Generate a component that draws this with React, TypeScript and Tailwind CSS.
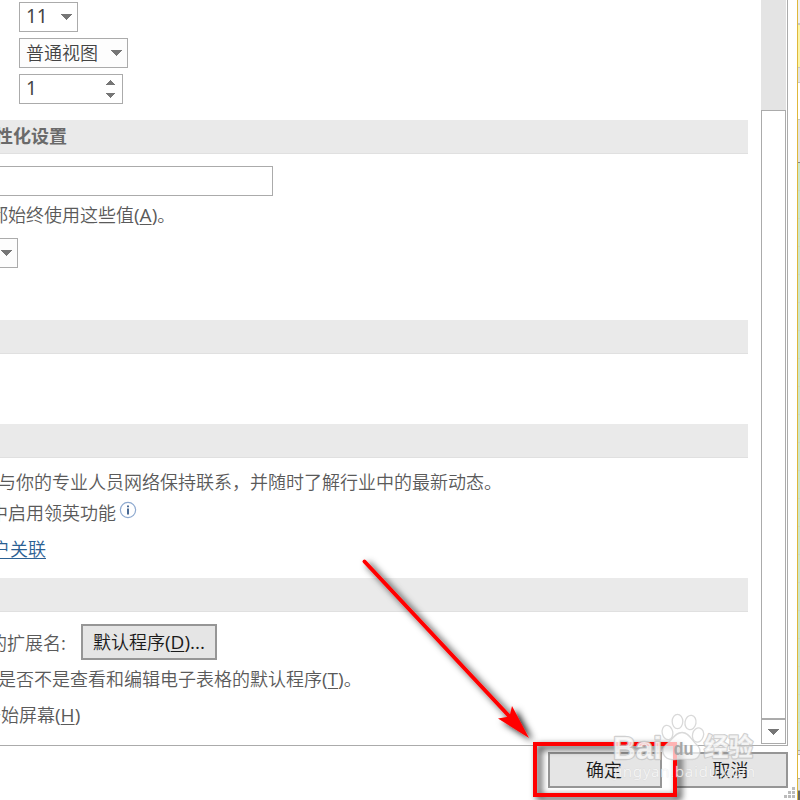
import type { ReactNode } from 'react';

function Down({ className = '' }: { className?: string }) {
  return (
    <svg className={className} width="11" height="6" viewBox="0 0 11 6" shapeRendering="crispEdges">
      <path d="M0 0H11L5.5 6Z" fill="#767676" />
    </svg>
  );
}

function SectionBar({ children, className = '' }: { children?: ReactNode; className?: string }) {
  return (
    <div className={`flex h-[34px] w-[748px] shrink-0 items-center border-b border-[#e0e0e0] bg-[#eaeaea] font-bold text-[#6a6a6a] ${className}`}>
      {children}
    </div>
  );
}

function Line({ children, className = '' }: { children: ReactNode; className?: string }) {
  return <div className={`flex h-[24px] shrink-0 items-center whitespace-nowrap ${className}`}>{children}</div>;
}

function Key({ children }: { children: string }) {
  return <span className="underline decoration-1 underline-offset-2">{children}</span>;
}

function Latin({ children }: { children: ReactNode }) {
  return <span className="font-['Open_Sans'] text-[19px] font-normal">{children}</span>;
}

function InfoIcon() {
  return (
    <svg className="ml-[3px] -mt-[5px]" width="18" height="18" viewBox="0 0 18 18" fill="none">
      <circle cx="9" cy="9" r="7.6" stroke="#8faad0" strokeWidth="1.2" />
      <path d="M8 4.5h2v1.8H8zM8 7.6h2v6H8z" fill="#4a6a94" />
    </svg>
  );
}

function Options() {
  return (
    <div className="flex h-[745px] w-[761px] flex-col overflow-hidden pt-[2px]">
      <div className="ml-[19px] flex h-[30px] w-[59px] shrink-0 items-center justify-between border border-[#ababab] pr-[5px] pl-[6px] text-[#444]">
        <span className="-mt-[2px] font-['Noto_Sans'] text-[19px] font-normal">11</span>
        <Down />
      </div>
      <div className="mt-[6px] ml-[19px] flex h-[30px] w-[109px] shrink-0 items-center justify-between border border-[#ababab] bg-[#fdfdfd] pr-[5px] pl-[6px] text-[#444]">
        <span className="-mt-[2px]">普通视图</span>
        <Down />
      </div>
      <div className="mt-[6px] ml-[19px] flex h-[30px] w-[104px] shrink-0 items-center justify-between border border-[#ababab] pr-[7px] pl-[6px] text-[#444]">
        <span className="-mt-[2px] font-['Noto_Sans'] text-[19px] font-normal">1</span>
        <div className="flex flex-col gap-[8px]">
          <svg width="9" height="5" viewBox="0 0 9 5" shapeRendering="crispEdges">
            <path d="M0 5H9L4.5 0Z" fill="#767676" />
          </svg>
          <svg width="9" height="5" viewBox="0 0 9 5" shapeRendering="crispEdges">
            <path d="M0 0H9L4.5 5Z" fill="#767676" />
          </svg>
        </div>
      </div>

      <SectionBar className="mt-[16px]">
        <span className="-mt-[3px] -ml-[5px]">性化设置</span>
      </SectionBar>
      <div className="mt-[12px] h-[30px] w-[273px] shrink-0 border border-l-0 border-[#ababab]" />
      <Line className="mt-[6px] mb-[2px] -ml-[10px]">
        <span>都始终使用这些值<Latin>(<Key>A</Key>)</Latin>。</span>
      </Line>
      <div className="mt-[10px] flex h-[30px] w-[18px] shrink-0 items-center border border-l-0 border-[#ababab] bg-[#fdfdfd] pl-px">
        <Down />
      </div>

      <SectionBar className="mt-[52px]" />
      <SectionBar className="mt-[70px]" />
      <Line className="mt-[11px] mb-[2px] -ml-[2px]">与你的专业人员网络保持联系，并随时了解行业中的最新动态。</Line>
      <Line className="mt-[5px] mb-[2px] -ml-[10px]">
        中启用领英功能
        <InfoIcon />
      </Line>
      <Line className="mt-[10px] mb-[3px] -ml-[8px] text-[#2b6093]">
        <span className="underline decoration-1 underline-offset-2">户关联</span>
      </Line>

      <SectionBar className="mt-[15px]" />
      <div className="mt-[12px] flex h-[36px] shrink-0 items-center">
        <span className="-mt-px -ml-[11px] w-[92px] whitespace-nowrap">的扩展名:</span>
        <button className="flex h-[36px] w-[136px] items-center justify-center border-2 border-[#969696] bg-[#e5e5e5] whitespace-nowrap text-[#1a1a1a]">
          <span className="-mt-px">默认程序<Latin>(<Key>D</Key>)...</Latin></span>
        </button>
      </div>
      <Line className="mt-[6px] mb-px -ml-[2px]">
        <span>是否不是查看和编辑电子表格的默认程序<Latin>(<Key>T</Key>)</Latin>。</span>
      </Line>
      <Line className="mt-[11px] -ml-[17px]">
        <span>开始屏幕<Latin>(<Key>H</Key>)</Latin></span>
      </Line>
    </div>
  );
}

function ScrollBar() {
  return (
    <div className="flex h-[745px] w-[25px] flex-col">
      <div className="h-[110px] bg-[#e4e4e4]" />
      <div className="h-[608px] border border-b-0 border-[#ababab] bg-white" />
      <div className="flex h-[26px] items-center justify-center border border-t-2 border-[#ababab] bg-white">
        <Down />
      </div>
    </div>
  );
}

function SheetEdge() {
  return (
    <div className="flex h-[800px] w-[3px] flex-col border-l border-[#e0b83a]">
      <div className="h-[23px] bg-[#f0f0f0]" />
      <div className="h-[2px] bg-[#c8c8c8]" />
      <div className="h-[42px] bg-[#fbf4a8]" />
      <div className="h-[16px] border-y border-[#c6c6c6] bg-[#e2e2e2]" />
      <div className="h-[36px] bg-white" />
      <div className="h-[43px] border-t border-[#c6c6c6] bg-[#e2e2e2]" />
      <div className="h-[28px] border-t border-[#888] bg-[#cbe6cd]" />
      {Array.from({ length: 20 }, (_, i) => (
        <div key={i} className="h-[28px] border-t border-[#cfd8c8] bg-[#cbe6cd]" />
      ))}
      <div className="h-[5px] shrink-0 border-y border-[#aaa] bg-[#e2e2e2]" />
      <div className="h-[23px] shrink-0 bg-white" />
      <div className="h-[13px] shrink-0 border-y border-[#aaa] bg-[#e2e2e2]" />
      <div className="grow bg-[#666]" />
    </div>
  );
}

const gripCells = [0, 0, 1, 0, 1, 1, 1, 1, 1];

function Annotations() {
  return (
    <svg className="pointer-events-none absolute inset-0" width="800" height="800" viewBox="0 0 800 800">
      <defs>
        <filter id="shade" x="-20%" y="-20%" width="150%" height="150%">
          <feDropShadow dx="4" dy="3" stdDeviation="3.5" floodColor="#000" floodOpacity="0.9" />
        </filter>
      </defs>
      <g filter="url(#shade)">
        <path d="M364.500 561.500L509 716" stroke="#f00" strokeWidth="4" strokeLinecap="round" />
        <path d="M529 738L498 718.500L509.500 716.500L512 706Z" fill="#f00" />
      </g>
      <rect x="535" y="744" width="140" height="51" fill="none" stroke="#f00" strokeWidth="4" filter="url(#shade)" />
    </svg>
  );
}

function Watermark() {
  return (
    <svg className="pointer-events-none absolute top-[705px] left-[605px]" width="165" height="95" viewBox="605 705 165 95">
      <g fill="#fff" fillOpacity="0.7" stroke="#d0d0d0" strokeOpacity="0.8" strokeWidth="1.300">
        <ellipse cx="667.500" cy="732.500" rx="5.300" ry="7.200" transform="rotate(-12 667.500 732.500)" />
        <ellipse cx="677.500" cy="721.500" rx="5.300" ry="7.200" />
        <ellipse cx="690.500" cy="722.500" rx="5.500" ry="7.200" transform="rotate(10 690.500 722.500)" />
        <ellipse cx="698" cy="735" rx="5.500" ry="7.200" transform="rotate(15 698 735)" />
        <path d="M682 732.500c7 0 9 7 14 11.500c7 6 4 15.500-4 15.500c-5 0-12-1-18 0c-10 1-15-9-7-15.500c6-5 8-11.500 15-11.500Z" />
      </g>
      <g fontWeight="700" paintOrder="stroke" strokeWidth="2.400" stroke="#c4c4c4" strokeOpacity="0.8" strokeLinejoin="round" fill="#fff" fillOpacity="0.75">
        <text x="613" y="758.500" fontFamily="'Liberation Sans', sans-serif" fontSize="31" textLength="49" lengthAdjust="spacingAndGlyphs">Bai</text>
        <text x="704" y="756" fontFamily="'Noto Sans CJK SC', sans-serif" fontSize="24.500" textLength="49">经验</text>
      </g>
      <text x="673.500" y="754.500" fontFamily="'Liberation Sans', sans-serif" fontSize="19" fontWeight="700" fill="#a6a6a6" textLength="20" lengthAdjust="spacingAndGlyphs">du</text>
      <text x="614" y="777" fontFamily="'Noto Sans', sans-serif" fontSize="15" fill="#fff" fillOpacity="0.8" stroke="#ccc" strokeOpacity="0.3" strokeWidth="1" paintOrder="stroke" textLength="141">jingyan.baidu.com</text>
    </svg>
  );
}

export default function App() {
  return (
    <div className="relative flex h-[800px] w-[800px] overflow-hidden bg-white font-['Noto_Sans_CJK_SC',sans-serif] text-[18px] leading-[24px] font-[350] text-[#5a5a5a]">
      <div className="flex w-[797px] shrink-0 flex-col">
        <div className="flex h-[746px] w-[788px] border-r border-b border-[#ababab]">
          <Options />
          <ScrollBar />
        </div>
        <div className="flex h-[54px] items-start pt-[6px] pl-[548px]">
          <button className="h-[36px] w-[114px] shrink-0 border-2 border-[#969696] bg-[#e5e5e5] pr-[2px] pb-[2px] text-[#1a1a1a]">确定</button>
          <button className="ml-[11px] h-[36px] w-[115px] shrink-0 border-2 border-[#969696] bg-[#e5e5e5] pb-[2px] text-[#1a1a1a]">取消</button>
          <div className="mt-[35px] -ml-[4px] grid grid-cols-3 gap-px">
            {gripCells.map((on, i) => (
              <span key={i} className={`size-[3px] ${on ? 'bg-[#bcbcbc]' : ''}`} />
            ))}
          </div>
        </div>
      </div>
      <SheetEdge />
      <Annotations />
      <Watermark />
    </div>
  );
}
